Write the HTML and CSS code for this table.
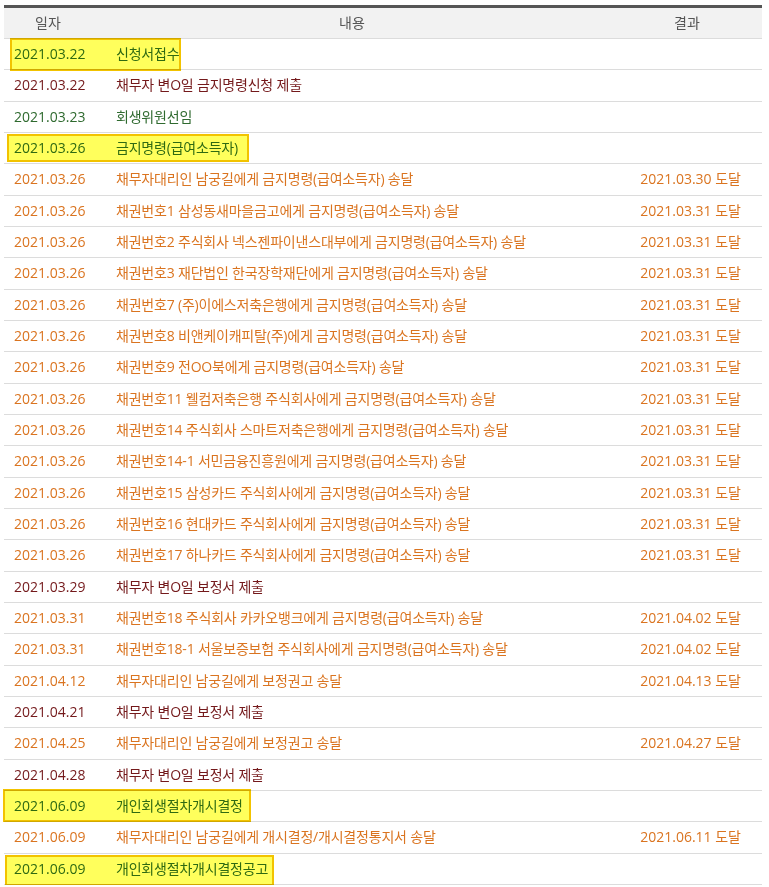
FILE: index.html
```html
<!DOCTYPE html>
<html lang="ko">
<head>
    <meta charset="UTF-8">
    <meta name="viewport" content="width=device-width, initial-scale=1.0">
    <title>사건진행내용</title>
    <link rel="stylesheet" href="styles.css">
</head>
<body>
    <div class="history">
        <div class="row head">
            <div class="c-date">일자</div>
            <div class="c-text">내용</div>
            <div class="c-result">결과</div>
        </div>

        <div class="row green"><div class="c-date">2021.03.22</div><div class="c-text">신청서접수</div><div class="c-result"></div></div>
        <div class="row red"><div class="c-date">2021.03.22</div><div class="c-text">채무자 변O일 금지명령신청 제출</div><div class="c-result"></div></div>
        <div class="row green"><div class="c-date">2021.03.23</div><div class="c-text">회생위원선임</div><div class="c-result"></div></div>
        <div class="row green"><div class="c-date">2021.03.26</div><div class="c-text">금지명령(급여소득자)</div><div class="c-result"></div></div>
        <div class="row orange"><div class="c-date">2021.03.26</div><div class="c-text">채무자대리인 남궁길에게 금지명령(급여소득자) 송달</div><div class="c-result">2021.03.30 도달</div></div>
        <div class="row orange"><div class="c-date">2021.03.26</div><div class="c-text">채권번호1 삼성동새마을금고에게 금지명령(급여소득자) 송달</div><div class="c-result">2021.03.31 도달</div></div>
        <div class="row orange"><div class="c-date">2021.03.26</div><div class="c-text">채권번호2 주식회사 넥스젠파이낸스대부에게 금지명령(급여소득자) 송달</div><div class="c-result">2021.03.31 도달</div></div>
        <div class="row orange"><div class="c-date">2021.03.26</div><div class="c-text">채권번호3 재단법인 한국장학재단에게 금지명령(급여소득자) 송달</div><div class="c-result">2021.03.31 도달</div></div>
        <div class="row orange"><div class="c-date">2021.03.26</div><div class="c-text">채권번호7 (주)이에스저축은행에게 금지명령(급여소득자) 송달</div><div class="c-result">2021.03.31 도달</div></div>
        <div class="row orange"><div class="c-date">2021.03.26</div><div class="c-text">채권번호8 비앤케이캐피탈(주)에게 금지명령(급여소득자) 송달</div><div class="c-result">2021.03.31 도달</div></div>
        <div class="row orange"><div class="c-date">2021.03.26</div><div class="c-text">채권번호9 전OO북에게 금지명령(급여소득자) 송달</div><div class="c-result">2021.03.31 도달</div></div>
        <div class="row orange"><div class="c-date">2021.03.26</div><div class="c-text">채권번호11 웰컴저축은행 주식회사에게 금지명령(급여소득자) 송달</div><div class="c-result">2021.03.31 도달</div></div>
        <div class="row orange"><div class="c-date">2021.03.26</div><div class="c-text">채권번호14 주식회사 스마트저축은행에게 금지명령(급여소득자) 송달</div><div class="c-result">2021.03.31 도달</div></div>
        <div class="row orange"><div class="c-date">2021.03.26</div><div class="c-text">채권번호14-1 서민금융진흥원에게 금지명령(급여소득자) 송달</div><div class="c-result">2021.03.31 도달</div></div>
        <div class="row orange"><div class="c-date">2021.03.26</div><div class="c-text">채권번호15 삼성카드 주식회사에게 금지명령(급여소득자) 송달</div><div class="c-result">2021.03.31 도달</div></div>
        <div class="row orange"><div class="c-date">2021.03.26</div><div class="c-text">채권번호16 현대카드 주식회사에게 금지명령(급여소득자) 송달</div><div class="c-result">2021.03.31 도달</div></div>
        <div class="row orange"><div class="c-date">2021.03.26</div><div class="c-text">채권번호17 하나카드 주식회사에게 금지명령(급여소득자) 송달</div><div class="c-result">2021.03.31 도달</div></div>
        <div class="row red"><div class="c-date">2021.03.29</div><div class="c-text">채무자 변O일 보정서 제출</div><div class="c-result"></div></div>
        <div class="row orange"><div class="c-date">2021.03.31</div><div class="c-text">채권번호18 주식회사 카카오뱅크에게 금지명령(급여소득자) 송달</div><div class="c-result">2021.04.02 도달</div></div>
        <div class="row orange"><div class="c-date">2021.03.31</div><div class="c-text">채권번호18-1 서울보증보험 주식회사에게 금지명령(급여소득자) 송달</div><div class="c-result">2021.04.02 도달</div></div>
        <div class="row orange"><div class="c-date">2021.04.12</div><div class="c-text">채무자대리인 남궁길에게 보정권고 송달</div><div class="c-result">2021.04.13 도달</div></div>
        <div class="row red"><div class="c-date">2021.04.21</div><div class="c-text">채무자 변O일 보정서 제출</div><div class="c-result"></div></div>
        <div class="row orange"><div class="c-date">2021.04.25</div><div class="c-text">채무자대리인 남궁길에게 보정권고 송달</div><div class="c-result">2021.04.27 도달</div></div>
        <div class="row red"><div class="c-date">2021.04.28</div><div class="c-text">채무자 변O일 보정서 제출</div><div class="c-result"></div></div>
        <div class="row green"><div class="c-date">2021.06.09</div><div class="c-text">개인회생절차개시결정</div><div class="c-result"></div></div>
        <div class="row orange"><div class="c-date">2021.06.09</div><div class="c-text">채무자대리인 남궁길에게 개시결정/개시결정통지서 송달</div><div class="c-result">2021.06.11 도달</div></div>
        <div class="row green"><div class="c-date">2021.06.09</div><div class="c-text">개인회생절차개시결정공고</div><div class="c-result"></div></div>

        <!-- 형광펜 표시 -->
        <div class="mark mark-1"></div>
        <div class="mark mark-2"></div>
        <div class="mark mark-3"></div>
        <div class="mark mark-4"></div>
    </div>
</body>
</html>
```

FILE: styles.css
```css
* { box-sizing: border-box; margin: 0; padding: 0; }
body {
    font-family: 'Open Sans', 'Noto Sans CJK KR', sans-serif;
    background: #fff;
    color: #333;
}
.history {
    position: relative;
    width: 758px;
    margin: 5px 0 0 4px;
    border-top: 3px solid #555;
}
.row {
    display: grid;
    grid-template-columns: 88px 520px 150px;
    align-items: center;
    height: 31.333px;
    border-bottom: 1px solid #dcdcdc;
}
.row.head {
    height: 31px;
    background: #f2f2f2;
    color: #555;
}
.row.head .c-date, .row.head .c-text, .row.head .c-result {
    padding: 0;
    text-align: center;
    font-size: 14px;
    letter-spacing: 0;
}
.c-date {
    padding-left: 10px;
    font-size: 14px;
    line-height: 18px;
    white-space: nowrap;
}
.c-text {
    padding-left: 24px;
    font-size: 14px;
    letter-spacing: -0.2px;
    line-height: 18px;
    white-space: nowrap;
}
.c-result {
    padding-right: 21px;
    text-align: right;
    font-size: 14px;
    line-height: 18px;
    white-space: nowrap;
}
.orange { color: #da7420; }
.red { color: #74191b; }
.green { color: #2f6a2f; }

.mark {
    position: absolute;
    background: #ffff5c;
    border: 2px solid #f2c300;
    mix-blend-mode: multiply;
}
.mark-1 { left: 6px; top: 30px; width: 171px; height: 33px; }
.mark-2 { left: 3px; top: 126px; width: 242px; height: 28px; }
.mark-3 { left: -1px; top: 781px; width: 248px; height: 33px; }
.mark-4 { left: 1px; top: 847px; width: 269px; height: 31px; }
```
